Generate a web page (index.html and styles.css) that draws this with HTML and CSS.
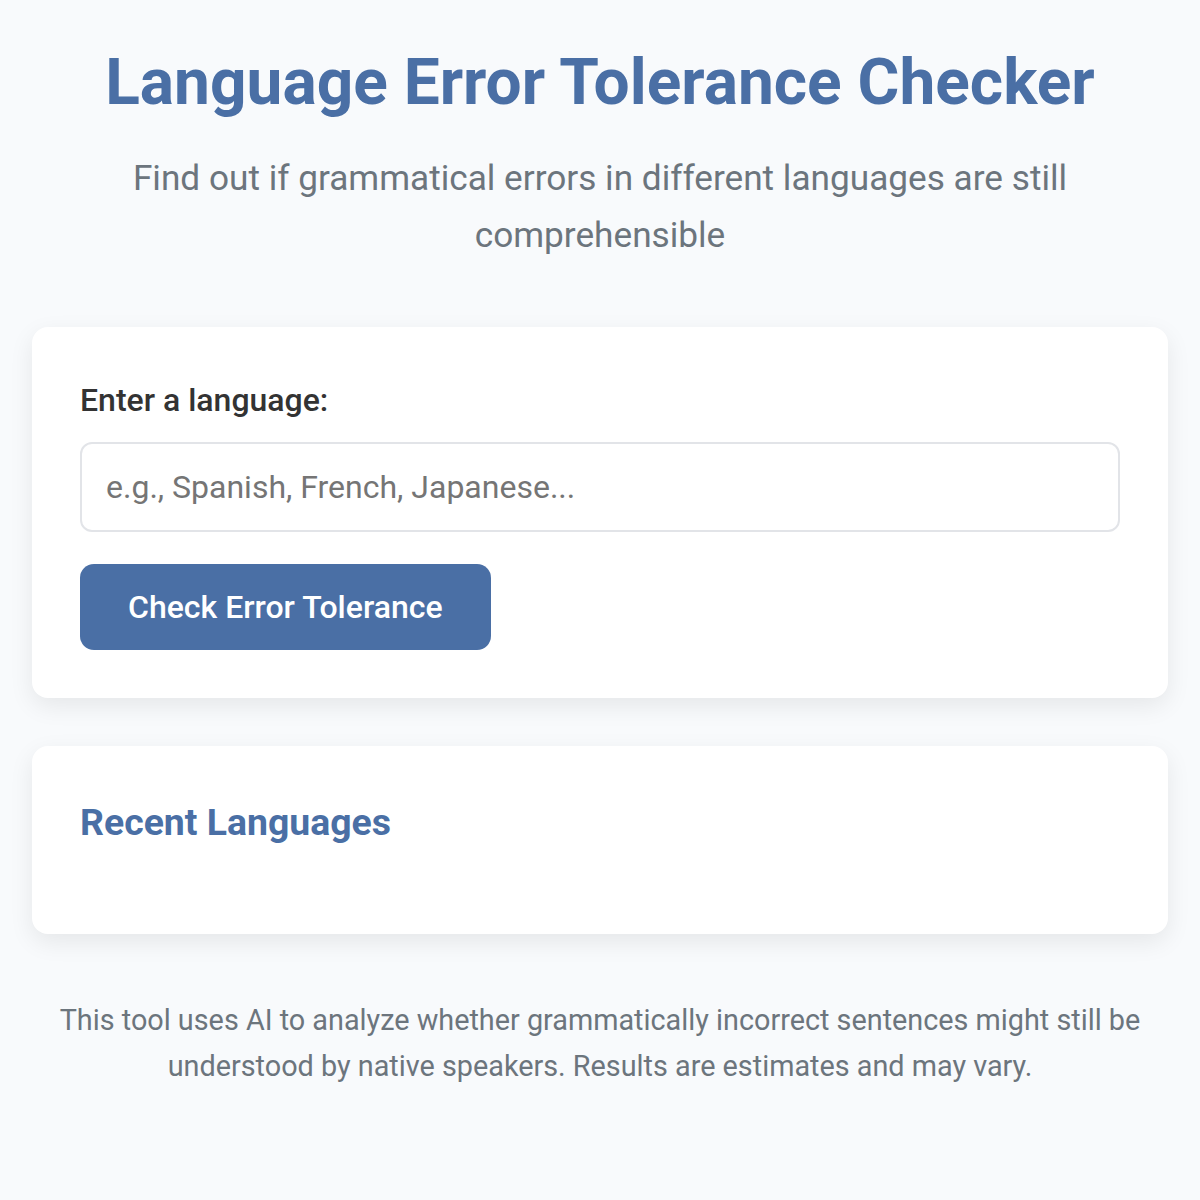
FILE: index.html
```html
<!DOCTYPE html>
<html lang="en">
<head>
    <meta charset="UTF-8">
    <meta name="viewport" content="width=device-width, initial-scale=1.0">
    <title>Language Error Tolerance Checker</title>
    <link rel="stylesheet" href="styles.css">
</head>
<body>
    <div class="container">
        <h1 class="page-title">Language Error Tolerance Checker</h1>
        <p class="page-subtitle">
            Find out if grammatical errors in different languages are still comprehensible
        </p>

        <div class="card">
            <label class="field-label" for="languageInput">Enter a language:</label>
            <input class="language-input" id="languageInput" type="text" placeholder="e.g., Spanish, French, Japanese...">
            <button class="check-button">Check Error Tolerance</button>
        </div>

        <div class="card">
            <h3 class="section-title">Recent Languages</h3>
            <ul class="recent-list" id="recentList"></ul>
        </div>

        <p class="disclaimer">
            This tool uses AI to analyze whether grammatically incorrect sentences might still be
            understood by native speakers. Results are estimates and may vary.
        </p>
    </div>
</body>
</html>
```

FILE: styles.css
```css
* {
    margin: 0;
    padding: 0;
    box-sizing: border-box;
}

body {
    font-family: Roboto, "Liberation Sans", sans-serif;
    font-size: 32px;
    line-height: 1.6;
    background: #f8fafc;
    color: #333;
    padding: 32px;
}

.container {
    max-width: 1136px;
    margin: 0 auto;
}

.page-title {
    font-size: 64px;
    font-weight: 700;
    color: #4a6fa5;
    text-align: center;
    margin-bottom: 16px;
}

.page-subtitle {
    font-size: 35.2px;
    color: #6c757d;
    text-align: center;
    margin-bottom: 64px;
}

.card {
    background: #fff;
    border-radius: 16px;
    padding: 48px;
    box-shadow: 0 8px 24px rgba(0, 0, 0, 0.08);
    margin-bottom: 48px;
}

.field-label {
    display: block;
    font-weight: 500;
    color: #333;
    margin-bottom: 16px;
}

.language-input {
    display: block;
    width: 100%;
    font-family: inherit;
    font-size: 32px;
    padding: 24px;
    border: 2px solid #e2e4e8;
    border-radius: 12px;
    color: #333;
    margin-bottom: 32px;
}

.language-input::placeholder {
    color: #757575;
}

.check-button {
    font-family: inherit;
    font-size: 32px;
    font-weight: 500;
    color: #fff;
    background: #4a6fa5;
    border: none;
    border-radius: 14px;
    padding: 24px 48px;
    cursor: pointer;
}

.section-title {
    font-size: 37.4px;
    font-weight: 700;
    line-height: 56px;
    color: #4a6fa5;
    margin-bottom: 36px;
}

.recent-list {
    list-style: none;
}

.disclaimer {
    font-size: 28.8px;
    color: #6c757d;
    text-align: center;
    margin-top: 63px;
}
```
